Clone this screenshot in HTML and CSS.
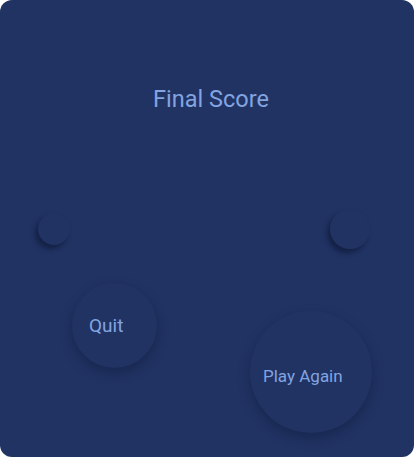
FILE: index.html
```html
<!DOCTYPE html>
<html>
<head>
<meta charset="utf-8">
<link rel="stylesheet" href="styles.css">
</head>
<body>
<div class="card">
  <h1 class="title">Final Score</h1>
  <div class="dots">
    <div class="dot dot-left"></div>
    <div class="dot dot-right"></div>
  </div>
  <div class="actions">
    <button class="btn btn-quit">Quit</button>
    <button class="btn btn-play">Play Again</button>
  </div>
</div>
</body>
</html>
```
FILE: styles.css
```css
html, body {
  margin: 0;
  padding: 0;
  background: #ffffff;
}
.card {
  width: 414px;
  height: 457px;
  box-sizing: border-box;
  background: #213363;
  border-radius: 12px;
  font-family: Roboto, "Noto Sans", sans-serif;
  color: #82a4e1;
  display: flex;
  flex-direction: column;
  overflow: hidden;
}
.title {
  margin: 85px 0 0 0;
  padding-left: 8px;
  font-weight: 400;
  font-size: 23.5px;
  line-height: 28px;
  text-align: center;
}
.dots {
  display: flex;
  justify-content: space-between;
  align-items: center;
  padding: 0 44px 0 38px;
  margin-top: 96px;
}
.dot {
  border-radius: 50%;
  background: #213363;
  box-shadow: -3px 4px 5px rgba(10, 18, 45, 0.55);
}
.dot-left {
  width: 32px;
  height: 32px;
}
.dot-right {
  width: 40px;
  height: 40px;
}
.actions {
  display: flex;
  align-items: flex-start;
  padding-left: 72px;
  margin-top: 34px;
}
.btn {
  border: none;
  border-radius: 50%;
  background: #213363;
  color: #82a4e1;
  font-family: Roboto, "Noto Sans", sans-serif;
  font-weight: 400;
  text-align: left;
  padding: 0;
  box-shadow: 0 5px 12px rgba(10, 18, 45, 0.35);
}
.btn-quit {
  width: 85px;
  height: 85px;
  font-size: 19px;
  padding-left: 17px;
}
.btn-play {
  width: 122px;
  height: 122px;
  font-size: 17px;
  padding-left: 13px;
  padding-top: 8px;
  margin-left: 93px;
  margin-top: 28px;
}
```
